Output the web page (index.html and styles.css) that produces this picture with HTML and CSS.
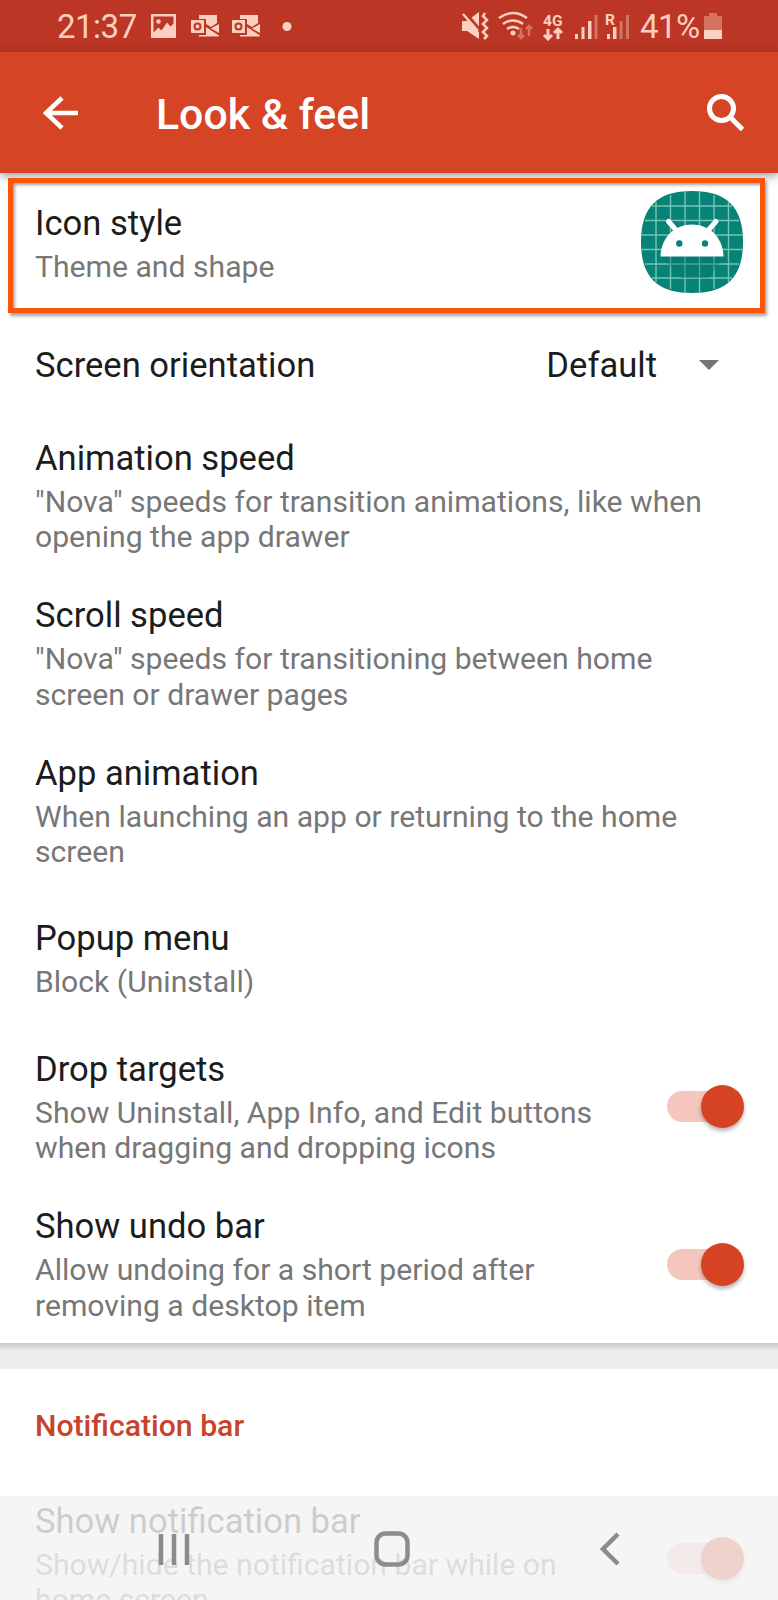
FILE: index.html
```html
<!DOCTYPE html>
<html lang="en">
<head>
  <meta charset="UTF-8">
  <title>Look &amp; feel</title>
  <link rel="stylesheet" href="styles.css">
</head>
<body>

  <!-- Status bar -->
  <div class="status-bar">
    <span class="clock">21:37</span>
    <svg class="notif-icons" width="146" height="30" viewBox="0 0 146 30">
      <path fill-rule="evenodd" d="M1 3h23q1 0 1 1v22q0 1-1 1H1q-1 0-1-1V4q0-1 1-1zM2.500 5.500v16l5-5 3 3 5.500-8 3.500 4 3-3V5.500z"/>
      <circle cx="7.500" cy="10.500" r="2.300"/>
      <g id="mail">
        <path d="M48 4h18v8l-6 4-5-3V8h-7z"/>
        <path fill-rule="evenodd" d="M41 9h12v13H41q-1 0-1-1V10q0-1 1-1zm5.500 2.500a4 4 0 1 0 0 8 4 4 0 0 0 0-8zm0 2a2 2 0 1 1 0 4 2 2 0 0 1 0-4z"/>
        <path d="M68 13v9l-8-4.500zM55 16l13 8.500q0 1-1 1H48V24h7z"/>
      </g>
      <use href="#mail" x="41"/>
      <circle cx="136" cy="15.500" r="4.500"/>
    </svg>
    <svg class="signal-icons" width="172" height="30" viewBox="0 0 172 30">
      <!-- mute / vibrate -->
      <path d="M0 10h5l12-9v27l-12-8H0z"/>
      <path class="cut" d="M3 2l17 20"/>
      <path class="line" d="M1 3l15 17M23 2l-2 3 4 4-4 4 4 4-4 4 4 4-3 3"/>
      <!-- wifi -->
      <path class="line" d="M37 7q14-10 28 0M41 13q10-7 20 0M45 18q6-4 12 0"/>
      <circle cx="51" cy="22" r="2.500"/>
      <path class="line dim" d="M59 17v10m-3-3l3 3 3-3M67 25V15m-3 3l3-3 3 3"/>
      <!-- mobile data -->
      <text x="81" y="15" class="net">4G</text>
      <path class="line bold" d="M86 18v9m-4-3l4 4 4-4M96 28v-9m-4 3l4-4 4 4"/>
      <!-- sim 1 -->
      <path d="M113 23h3v5h-3zM119.500 16h3v12h-3zM126 10h3.500v18h-3.500z"/>
      <path class="dim" d="M132.500 4h3v24h-3z"/>
      <!-- sim 2, roaming -->
      <text x="143" y="14" class="net">R</text>
      <path d="M145 23h3v5h-3zM151 16h3.500v12h-3.500z"/>
      <path class="dim" d="M157.500 10h3v18h-3zM164 4h3v24h-3z"/>
    </svg>
    <span class="percent">41%</span>
    <svg class="battery" width="18" height="28" viewBox="0 0 18 28">
      <path class="dim" d="M5 1h8v3h5v14H0V4h5z"/>
      <path d="M0 18h18v9H0z"/>
    </svg>
  </div>

  <!-- App bar -->
  <header class="app-bar">
    <svg class="back" width="37" height="34" viewBox="0 0 37 34">
      <path d="M20 2L4 17l16 15M4 17h32"/>
    </svg>
    <h1>Look &amp; feel</h1>
    <svg class="search" width="40" height="40" viewBox="0 0 40 40">
      <circle cx="15.500" cy="15.500" r="12"/>
      <path d="M24 24l12.500 12.500"/>
    </svg>
  </header>

  <main>
    <div class="item item-icon">
      <div class="text">
        <div class="title">Icon style</div>
        <div class="summary">Theme and shape</div>
      </div>
      <svg class="app-icon" width="102" height="102" viewBox="0 0 102 102">
        <path class="shape" d="M51 0C86 0 102 16 102 51S86 102 51 102 0 86 0 51 16 0 51 0z"/>
        <path class="grid" d="M15 11v80M29.500 4v94M44 0v102M58.500 0v102M73 4v94M87.500 11v80M11 15h80M4 29.500h94M0 44h102M0 58.500h102M4 73h94M11 87h80"/>
        <path class="shadow" d="M20 65h63L68 87H40z"/>
        <path class="antenna" d="M27.500 30.500l8 9M75 30.500l-8 9"/>
        <path class="head" d="M19.500 65.500C20 46 34 33.500 51 33.500S82 46 82.500 65.500z"/>
        <circle class="eye" cx="38.300" cy="52.500" r="3.200"/>
        <circle class="eye" cx="64" cy="52.500" r="3.200"/>
      </svg>
      <div class="highlight"></div>
    </div>

    <div class="item item-single">
      <div class="title">Screen orientation</div>
      <div class="select">Default <span class="arrow"></span></div>
    </div>

    <div class="item">
      <div class="text">
        <div class="title">Animation speed</div>
        <div class="summary">"Nova" speeds for transition animations, like when<br>opening the app drawer</div>
      </div>
    </div>

    <div class="item">
      <div class="text">
        <div class="title">Scroll speed</div>
        <div class="summary">"Nova" speeds for transitioning between home<br>screen or drawer pages</div>
      </div>
    </div>

    <div class="item">
      <div class="text">
        <div class="title">App animation</div>
        <div class="summary">When launching an app or returning to the home<br>screen</div>
      </div>
    </div>

    <div class="item item-short">
      <div class="text">
        <div class="title">Popup menu</div>
        <div class="summary">Block (Uninstall)</div>
      </div>
    </div>

    <div class="item">
      <div class="text">
        <div class="title">Drop targets</div>
        <div class="summary">Show Uninstall, App Info, and Edit buttons<br>when dragging and dropping icons</div>
      </div>
      <div class="switch"></div>
    </div>

    <div class="item">
      <div class="text">
        <div class="title">Show undo bar</div>
        <div class="summary">Allow undoing for a short period after<br>removing a desktop item</div>
      </div>
      <div class="switch"></div>
    </div>

    <div class="divider"></div>

    <h2>Notification bar</h2>

    <div class="item">
      <div class="text">
        <div class="title">Show notification bar</div>
        <div class="summary">Show/hide the notification bar while on<br>home screen</div>
      </div>
      <div class="switch"></div>
    </div>
  </main>

  <!-- System navigation, lies over the list -->
  <nav class="nav-bar">
    <svg width="32" height="36" viewBox="0 0 32 36"><path d="M3 3v31M16 3v31M29 3v31"/></svg>
    <svg class="home" width="36" height="36" viewBox="0 0 36 36"><rect x="2.500" y="2.500" width="31" height="31" rx="9"/></svg>
    <svg width="20" height="36" viewBox="0 0 20 36"><path d="M18 3L3 18l15 15"/></svg>
  </nav>

</body>
</html>
```

FILE: styles.css
```css
body {
  margin: 0;
  height: 1600px;
  position: relative;
  overflow: hidden;
  display: flex;
  flex-direction: column;
  background: #fff;
  font-family: Roboto, sans-serif;
}

svg {
  flex: none;
}

.status-bar {
  flex: none;
  box-sizing: border-box;
  height: 52px;
  padding-left: 57px;
  display: flex;
  align-items: center;
  background: #bb3624;
  color: #fccfc1;
  fill: #fccfc1;
  font-size: 33px;
  letter-spacing: -0.5px;
}

.clock {
  width: 94px;
  line-height: 54px;
  padding-top: 2px;
}

.signal-icons {
  margin-left: 165px;
}

.status-bar .line {
  fill: none;
  stroke: #fccfc1;
  stroke-width: 2.500;
}

.status-bar .bold {
  stroke-width: 3;
}

.status-bar .cut {
  fill: none;
  stroke: #bb3624;
  stroke-width: 4;
}

.status-bar .dim {
  opacity: 0.4;
}

.net {
  font-size: 15.500px;
  font-weight: 700;
  letter-spacing: 0;
}

.percent {
  width: 59px;
  margin-left: 6px;
  line-height: 54px;
  padding-top: 2px;
}

.battery {
  margin-left: 5px;
}

.app-bar {
  flex: none;
  box-sizing: border-box;
  height: 121px;
  padding: 0 32px 0 42px;
  display: flex;
  align-items: center;
  background: #d64426;
  position: relative;
  box-shadow: 0 3px 9px rgba(40, 30, 70, 0.45);
}

.app-bar svg {
  fill: none;
  stroke: #fff;
  stroke-width: 4.500;
}

.app-bar .search {
  margin-left: auto;
  stroke-width: 5;
}

.app-bar h1 {
  margin: 3px 0 0 77px;
  color: #fff;
  font-size: 42.800px;
  font-weight: 500;
}

main {
  flex: none;
}

.item {
  box-sizing: border-box;
  height: 157.700px;
  padding: 0 34px 0 35px;
  display: flex;
  align-items: center;
  justify-content: space-between;
  position: relative;
}

.item-icon {
  height: 140px;
}

.item-icon .text {
  padding-top: 1px;
}

.item-single {
  height: 103.500px;
}

.item-short {
  height: 138px;
}

.title,
.select {
  color: #1c1c1c;
  font-size: 34.600px;
  line-height: 42px;
}

.summary {
  margin-top: 5px;
  color: #777;
  font-size: 30.150px;
  line-height: 35.200px;
}

.highlight {
  position: absolute;
  left: 8px;
  top: 5px;
  right: 13px;
  height: 125px;
  border: 5px solid #fb5607;
  box-shadow: 2px 3px 3px rgba(60, 50, 80, 0.45), inset 2px 2px 3px rgba(60, 50, 80, 0.45);
}

.app-icon {
  margin-right: 1px;
  margin-bottom: 2px;
}

.app-icon .shape {
  fill: #078375;
}

.app-icon .grid {
  stroke: #74c4b9;
  stroke-width: 1.400;
}

.app-icon .shadow {
  fill: #067567;
  opacity: 0.4;
}

.app-icon .head {
  fill: #fff;
}

.app-icon .antenna {
  fill: none;
  stroke: #fff;
  stroke-width: 5;
  stroke-linecap: round;
}

.app-icon .eye {
  fill: #078375;
}

.select {
  display: flex;
  align-items: center;
  gap: 42px;
  padding-right: 25px;
}

.arrow {
  border: 10.500px solid transparent;
  border-top-color: #757575;
  border-bottom: 0;
}

.switch {
  width: 77px;
  height: 43px;
  position: relative;
}

.switch::before {
  content: "";
  position: absolute;
  left: 0;
  top: 6px;
  width: 70px;
  height: 31px;
  border-radius: 16px;
  background: #f4c6bd;
}

.switch::after {
  content: "";
  position: absolute;
  right: 0;
  top: 0;
  width: 43px;
  height: 43px;
  border-radius: 50%;
  background: #d64224;
  box-shadow: 0 3px 4px rgba(0, 0, 0, 0.3);
}

.divider {
  height: 26px;
  background: linear-gradient(#c8c8c8, #eee 8px);
}

h2 {
  margin: 0;
  height: 111px;
  padding: 0 35px;
  color: #c8432c;
  font-size: 30.200px;
  font-weight: 500;
  line-height: 114px;
}

.nav-bar {
  position: absolute;
  left: 0;
  right: 0;
  bottom: 0;
  box-sizing: border-box;
  height: 104px;
  padding: 35px 158px 0 158px;
  display: flex;
  justify-content: space-between;
  align-items: flex-start;
  background: rgba(243, 243, 243, 0.82);
}

.nav-bar svg {
  fill: none;
  stroke: #8c8c8c;
  stroke-width: 4.500;
}

.nav-bar .home {
  margin-right: 6px;
}
```
